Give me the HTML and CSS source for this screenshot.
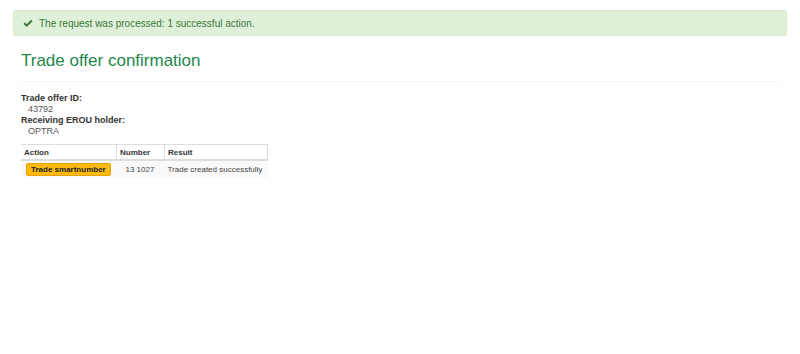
FILE: index.html
```html
<!DOCTYPE html>
<html lang="en">
<head>
  <meta charset="UTF-8">
  <title>Trade offer confirmation</title>
  <link rel="stylesheet" href="styles.css">
</head>
<body>
  <div class="alert alert-success">
    <svg class="alert-icon" viewBox="0 0 12 10" width="10" height="9">
      <path d="M0.6 5.4 L2.2 3.8 L4.4 6 L9.8 0.6 L11.4 2.2 L4.4 9.2 Z" fill="#3c763d"/>
    </svg>
    <span>The request was processed: 1 successful action.</span>
  </div>

  <div class="container">
    <h2 class="page-title">Trade offer confirmation</h2>

    <dl class="details">
      <dt>Trade offer ID:</dt>
      <dd>43792</dd>
      <dt>Receiving EROU holder:</dt>
      <dd>OPTRA</dd>
    </dl>

    <table class="result-table">
      <thead>
        <tr>
          <th class="col-action">Action</th>
          <th class="col-number">Number</th>
          <th class="col-result">Result</th>
        </tr>
      </thead>
      <tbody>
        <tr>
          <td><span class="badge">Trade smartnumber</span></td>
          <td class="num">13 1027</td>
          <td>Trade created successfully</td>
        </tr>
      </tbody>
    </table>
  </div>
</body>
</html>
```

FILE: styles.css
```css
body {
  font-family: "Liberation Sans", Arial, sans-serif;
  margin: 0;
  padding: 10px 13px;
  background: #fff;
  color: #333;
}

.alert {
  display: flex;
  align-items: center;
  gap: 6px;
  height: 24px;
  padding: 0 9px;
  border: 1px solid #d6e9c6;
  border-radius: 3px;
  font-size: 10px;
}

.alert-success {
  background: #dff0d8;
  color: #3c763d;
}

.alert-icon {
  display: block;
}

.container {
  padding: 0 8px;
}

.page-title {
  font-size: 17px;
  line-height: 20px;
  font-weight: normal;
  color: #23874b;
  margin: 15px 0 0;
  padding-bottom: 10px;
  border-bottom: 1px solid #f2f2f2;
}

.details {
  margin: 11px 0 0;
  font-size: 9px;
  line-height: 11px;
}

.details dt {
  font-weight: bold;
  color: #333;
}

.details dd {
  margin: 0 0 0 7px;
  color: #555;
}

.result-table {
  margin-top: 7px;
  width: 247px;
  table-layout: fixed;
  border-collapse: collapse;
  font-size: 8px;
  white-space: nowrap;
}

.result-table th {
  text-align: left;
  font-weight: bold;
  padding: 3px 3px 2px;
  border-top: 1px solid #ddd;
  border-bottom: 2px solid #ddd;
  border-left: 1px solid #ddd;
  height: 9px;
}

.result-table th:first-child {
  border-left: none;
}

.result-table th:last-child {
  border-right: 1px solid #ddd;
}

.col-action {
  width: 89px;
}

.col-number {
  width: 41px;
}

.result-table td {
  padding: 2px 3px;
  height: 12px;
  background: #f9f9f9;
  color: #444;
}

.result-table td.num {
  padding-left: 9px;
}

.badge {
  display: inline-block;
  margin-left: 2px;
  padding: 1px 4px;
  background: #fdba0c;
  border: 1px solid #e8a200;
  border-radius: 2px;
  font-weight: bold;
  color: #222;
}
```
